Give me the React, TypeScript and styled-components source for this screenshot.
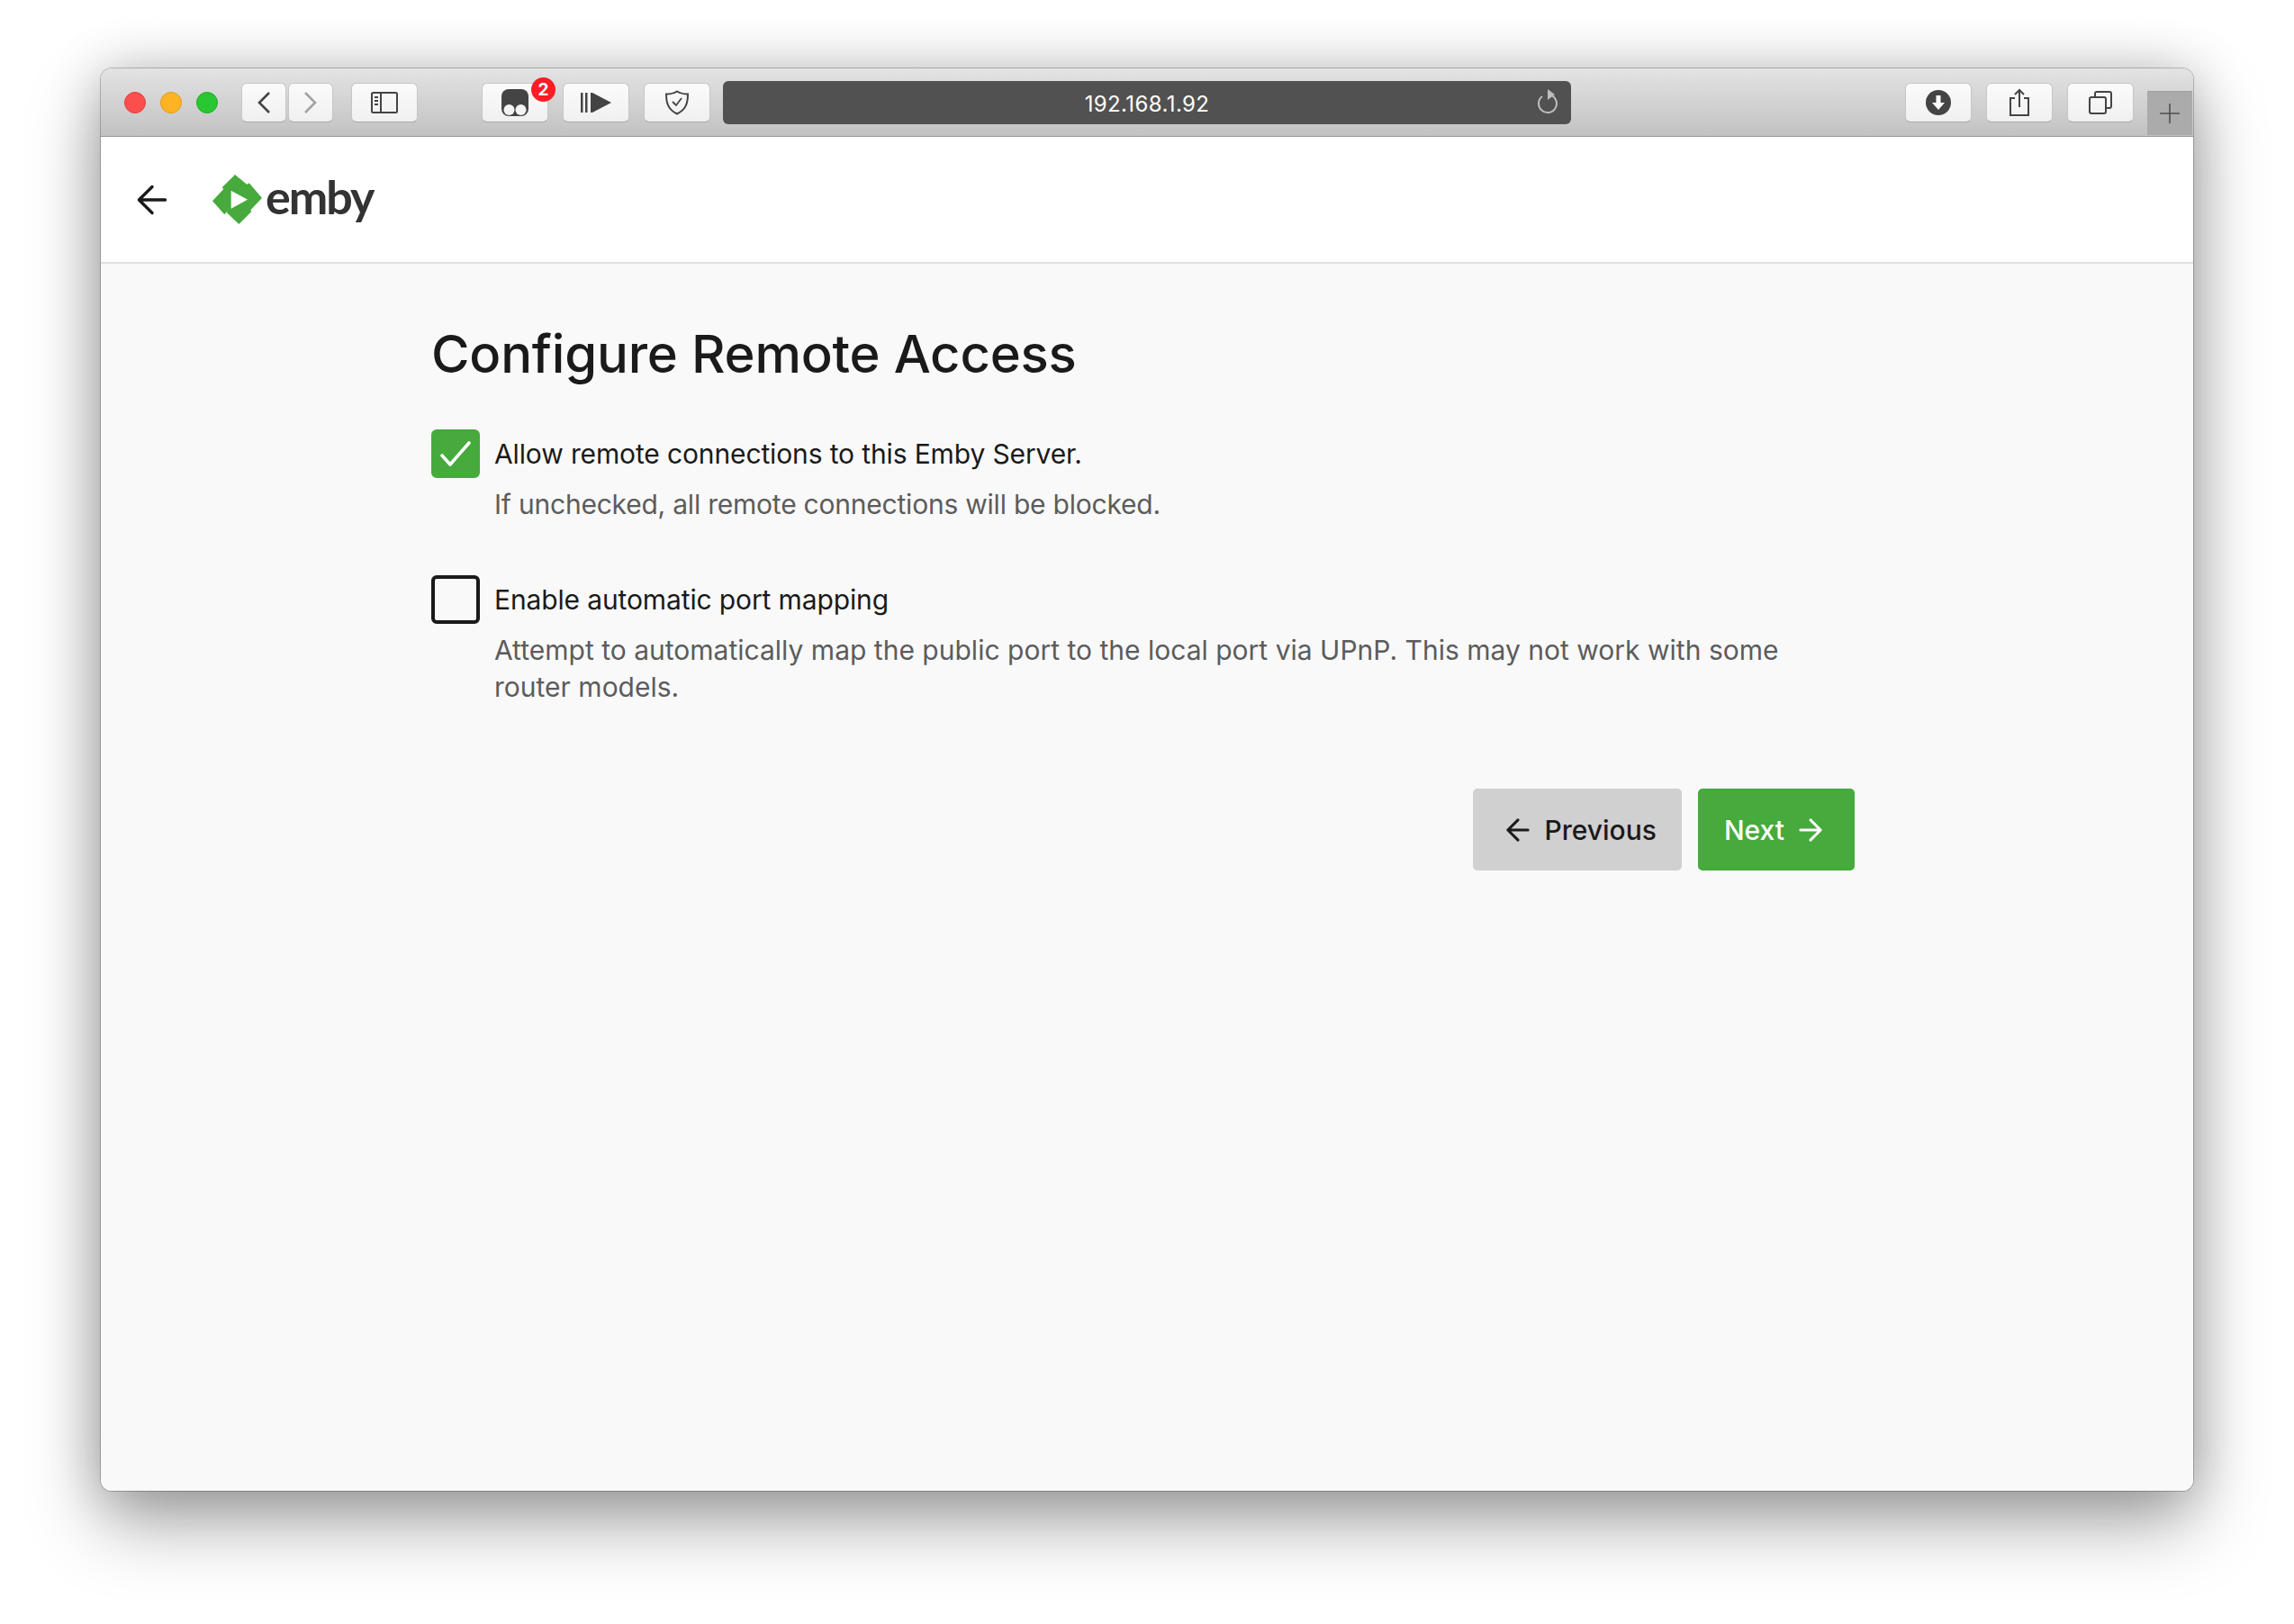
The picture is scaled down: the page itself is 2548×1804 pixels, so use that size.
import React from 'react';
import styled, { createGlobalStyle } from 'styled-components';

const GlobalStyle = createGlobalStyle`
  html, body {
    margin: 0;
    padding: 0;
    background: #ffffff;
  }
  body {
    font-family: Inter, "Noto Sans", "Liberation Sans", sans-serif;
  }
`;

const Stage = styled.div`
  box-sizing: border-box;
  width: 2548px;
  height: 1804px;
  padding: 76px 112px 0 112px;
  overflow: hidden;
`;

const BrowserWindow = styled.div`
  display: flex;
  flex-direction: column;
  height: 1580px;
  border-radius: 12px;
  overflow: hidden;
  box-shadow:
    0 0 0 1px rgba(0, 0, 0, 0.22),
    0 0 60px rgba(0, 0, 0, 0.2),
    0 36px 80px rgba(0, 0, 0, 0.34);
`;

const Toolbar = styled.div`
  box-sizing: border-box;
  flex: none;
  display: flex;
  align-items: center;
  height: 76px;
  padding: 0 0 0 26px;
  background: linear-gradient(#e3e3e3, #c2c2c2);
  border-bottom: 1px solid #969696;
`;

const Lights = styled.div`
  display: flex;
  gap: 16px;
  margin-right: 26px;
`;

const Light = styled.span<{ $color: string; $edge: string }>`
  box-sizing: border-box;
  width: 24px;
  height: 24px;
  border-radius: 50%;
  background: ${({ $color }) => $color};
  border: 1px solid ${({ $edge }) => $edge};
`;

const ToolButton = styled.div<{ $width?: number; $left?: number }>`
  box-sizing: border-box;
  position: relative;
  flex: none;
  display: flex;
  align-items: center;
  justify-content: center;
  width: ${({ $width }) => $width ?? 74}px;
  height: 44px;
  margin-left: ${({ $left }) => $left ?? 0}px;
  background: linear-gradient(#fbfbfb, #f0f0f0);
  border: 1px solid #c6c6c6;
  border-bottom-color: #a9a9a9;
  border-radius: 6px;
  color: #444444;
`;

const Badge = styled.span`
  position: absolute;
  top: -7px;
  right: -9px;
  width: 27px;
  height: 27px;
  border-radius: 50%;
  background: #fc1c24;
  color: #ffffff;
  font-size: 19px;
  font-weight: 700;
  line-height: 27px;
  text-align: center;
`;

const AddressBar = styled.div`
  box-sizing: border-box;
  position: relative;
  flex: none;
  width: 942px;
  height: 48px;
  margin-left: 14px;
  background: #515151;
  border-radius: 6px;
  color: #ffffff;
  font-size: 24px;
  line-height: 52px;
  text-align: center;
  letter-spacing: 0.4px;
`;

const ReloadSlot = styled.span`
  position: absolute;
  top: 9px;
  right: 14px;
  display: flex;
  color: #bdbdbd;
`;

const NewTab = styled.div`
  box-sizing: border-box;
  flex: none;
  align-self: flex-end;
  display: flex;
  align-items: center;
  justify-content: center;
  width: 50px;
  height: 49px;
  margin-left: 15px;
  margin-bottom: 1px;
  background: #ababab;
  border-top: 1px solid #a0a0a0;
  color: #505050;
`;

const Page = styled.div`
  flex: 1;
  display: flex;
  flex-direction: column;
  background: #f9f9f9;
`;

const Header = styled.header`
  box-sizing: border-box;
  flex: none;
  display: flex;
  align-items: center;
  height: 141px;
  padding: 0 0 0 40px;
  background: #ffffff;
  border-bottom: 2px solid #e0e0e0;
  color: #1a1a1a;
`;

const Logo = styled.div`
  display: flex;
  align-items: center;
  margin-left: 50px;
  color: #333333;
`;

const Wordmark = styled.span`
  margin-left: 4px;
  padding-bottom: 8px;
  font-family: Lato, Inter, sans-serif;
  font-size: 52px;
  font-weight: 700;
  letter-spacing: -2px;
  line-height: 56px;
`;

const Content = styled.main`
  display: flex;
  flex-direction: column;
  padding: 64px 376px 0 367px;
`;

const Title = styled.h1`
  margin: 0 0 48px;
  color: #1a1a1a;
  font-size: 58px;
  font-weight: 500;
  line-height: 72px;
  letter-spacing: -0.2px;
`;

const Option = styled.div`
  display: grid;
  grid-template-columns: 54px 1fr;
  column-gap: 16px;
  margin-bottom: 58px;
`;

const CheckBox = styled.span<{ $checked?: boolean }>`
  box-sizing: border-box;
  display: flex;
  align-items: center;
  justify-content: center;
  width: 54px;
  height: 54px;
  border-radius: 6px;
  border: 4px solid ${({ $checked }) => ($checked ? '#46aa3c' : '#1a1a1a')};
  background: ${({ $checked }) => ($checked ? '#46aa3c' : 'transparent')};
  color: #ffffff;
`;

const Label = styled.div`
  align-self: center;
  color: #1a1a1a;
  font-size: 30px;
  line-height: 54px;
  letter-spacing: -0.13px;
`;

const Hint = styled.div<{ $tracking: number }>`
  grid-column: 2;
  max-width: 1460px;
  margin-top: 9px;
  color: #5c5c5c;
  font-size: 30px;
  line-height: 41px;
  letter-spacing: ${({ $tracking }) => $tracking}px;
`;

const Actions = styled.div`
  display: flex;
  justify-content: flex-end;
  gap: 18px;
  margin-top: 34px;
`;

const ActionButton = styled.div<{ $primary?: boolean }>`
  box-sizing: border-box;
  display: flex;
  align-items: center;
  gap: 16px;
  height: 91px;
  padding: ${({ $primary }) => ($primary ? '0 36px 0 29px' : '0 28px 0 37px')};
  border-radius: 5px;
  background: ${({ $primary }) => ($primary ? '#46aa3c' : '#d0d0d0')};
  color: ${({ $primary }) => ($primary ? '#ffffff' : '#1a1a1a')};
  font-size: 30px;
  font-weight: 500;
`;

const Arrow = ({ dir = 'left', size = 28, weight = 3 }: { dir?: 'left' | 'right'; size?: number; weight?: number }) => (
  <svg width={size} height={size} viewBox="0 0 28 28" fill="none" stroke="currentColor" strokeWidth={(weight * 28) / size} strokeLinecap="round" strokeLinejoin="round">
    {dir === 'left' ? <path d="M26 14H2M14 2 2 14l12 12" /> : <path d="M2 14h24M14 2l12 12-12 12" />}
  </svg>
);

const EmbyMark = () => (
  <svg width="55" height="55" viewBox="0 0 165 165">
    <polygon
      fill="#46aa3c"
      points="75,0 119,36 115,33 122,28 165,78 127,118 130,123 88,165 47,126 52,118 40,133 0,88 37,48 32,43"
    />
    <polygon fill="#ffffff" points="62,53 117,83 62,113" />
  </svg>
);

const App: React.FC = () => (
  <Stage>
    <GlobalStyle />
    <BrowserWindow>
      <Toolbar>
        <Lights>
          <Light $color="#fc4e4c" $edge="#e0403c" />
          <Light $color="#fdb324" $edge="#df9a1c" />
          <Light $color="#29c732" $edge="#20ad2a" />
        </Lights>
        <ToolButton $width={50}>
          <svg width="16" height="26" viewBox="0 0 16 26" fill="none" stroke="#444" strokeWidth="2.6">
            <path d="M14 2 3 13l11 11" />
          </svg>
        </ToolButton>
        <ToolButton $width={50} $left={2}>
          <svg width="16" height="26" viewBox="0 0 16 26" fill="none" stroke="#a2a2a2" strokeWidth="2.6">
            <path d="m2 2 11 11L2 24" />
          </svg>
        </ToolButton>
        <ToolButton $left={20}>
          <svg width="30" height="24" viewBox="0 0 30 24" fill="none" stroke="#444" strokeWidth="2">
            <rect x="1" y="1" width="28" height="22" rx="1.5" />
            <path d="M11 1v22M4 6h4M4 10h4M4 14h4" />
          </svg>
        </ToolButton>
        <ToolButton $left={71}>
          <svg width="30" height="30" viewBox="0 0 30 30">
            <rect x="0" y="0" width="30" height="30" rx="8" fill="#444" />
            <circle cx="8.5" cy="23" r="6" fill="#f4f4f4" />
            <circle cx="21.5" cy="23" r="6" fill="#f4f4f4" />
          </svg>
          <Badge>2</Badge>
        </ToolButton>
        <ToolButton $left={16}>
          <svg width="34" height="22" viewBox="0 0 34 22" fill="#444">
            <rect x="0" y="0" width="2.5" height="22" />
            <rect x="5" y="0" width="2.5" height="22" />
            <path d="M11 0h2l21 11-21 11h-2z" />
          </svg>
        </ToolButton>
        <ToolButton $left={16}>
          <svg width="28" height="28" viewBox="0 0 28 28" fill="none" stroke="#444" strokeWidth="2">
            <path d="M14 1.5c4 2.5 8 3 12 3 0 10-2 17-12 22-10-5-12-12-12-22 4 0 8-.5 12-3z" />
            <path d="m9 13 4 4 6-8" strokeWidth="1.8" />
          </svg>
        </ToolButton>
        <AddressBar>
          192.168.1.92
          <ReloadSlot>
            <svg width="24" height="28" viewBox="0 0 24 28" fill="none" stroke="currentColor" strokeWidth="2">
              <path d="M15 6.5A10 10 0 1 1 6 8" />
              <path d="M12 0l8 6-8 6z" fill="currentColor" stroke="none" />
            </svg>
          </ReloadSlot>
        </AddressBar>
        <ToolButton $left={371}>
          <svg width="28" height="28" viewBox="0 0 28 28">
            <circle cx="14" cy="14" r="14" fill="#444" />
            <path d="M11.5 6h5v8H21l-7 8-7-8h4.5z" fill="#fff" />
          </svg>
        </ToolButton>
        <ToolButton $left={16}>
          <svg width="24" height="32" viewBox="0 0 24 32" fill="none" stroke="#444" strokeWidth="2">
            <path d="M7 11H2v19h20V11h-5M12 21V2M7 7l5-5 5 5" />
          </svg>
        </ToolButton>
        <ToolButton $left={16}>
          <svg width="26" height="26" viewBox="0 0 26 26" fill="none" stroke="#444" strokeWidth="2">
            <rect x="1" y="7" width="18" height="18" rx="2" />
            <path d="M7 7V3a2 2 0 0 1 2-2h14a2 2 0 0 1 2 2v14a2 2 0 0 1-2 2h-4" />
          </svg>
        </ToolButton>
        <NewTab>
          <svg width="24" height="24" viewBox="0 0 24 24" stroke="currentColor" strokeWidth="1.6">
            <path d="M12 1v22M1 12h22" />
          </svg>
        </NewTab>
      </Toolbar>
      <Page>
        <Header>
          <Arrow size={34} weight={3.4} />
          <Logo>
            <EmbyMark />
            <Wordmark>emby</Wordmark>
          </Logo>
        </Header>
        <Content>
          <Title>Configure Remote Access</Title>
          <Option>
            <CheckBox $checked>
              <svg width="36" height="30" viewBox="0 0 36 30" fill="none" stroke="currentColor" strokeWidth="3.6" strokeLinecap="round" strokeLinejoin="round">
                <path d="m3 17 9 10L33 3" />
              </svg>
            </CheckBox>
            <Label>Allow remote connections to this Emby Server.</Label>
            <Hint $tracking={-0.22}>If unchecked, all remote connections will be blocked.</Hint>
          </Option>
          <Option>
            <CheckBox />
            <Label>Enable automatic port mapping</Label>
            <Hint $tracking={0.01}>Attempt to automatically map the public port to the local port via UPnP. This may not work with some router models.</Hint>
          </Option>
          <Actions>
            <ActionButton>
              <Arrow size={26} />
              Previous
            </ActionButton>
            <ActionButton $primary>
              Next
              <Arrow dir="right" size={26} />
            </ActionButton>
          </Actions>
        </Content>
      </Page>
    </BrowserWindow>
  </Stage>
);

export default App;
